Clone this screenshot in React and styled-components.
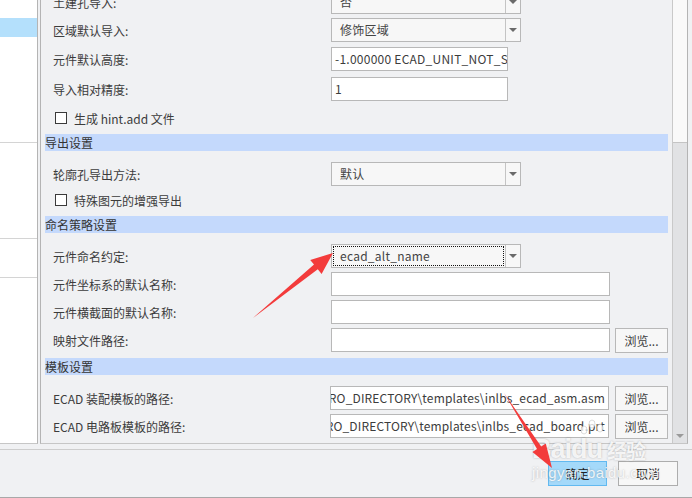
import styled, { createGlobalStyle } from 'styled-components';

const GlobalStyle = createGlobalStyle`
  html, body { margin: 0; padding: 0; }
  body {
    background: #f0f1f3;
    font-family: "Noto Sans CJK SC", "Noto Sans", sans-serif;
  }
`;

const FONT = `"Noto Sans CJK SC", "Noto Sans", sans-serif`;

const Window = styled.div`
  position: relative;
  width: 692px;
  height: 498px;
  overflow: hidden;
  background: #f0f1f3;
  display: flex;
  flex-direction: column;
  font-family: ${FONT};
  font-size: 12px;
  color: #3c3c3c;
`;

const Body = styled.div`
  display: flex;
  height: 444px;
  flex-shrink: 0;
`;

const NavPane = styled.div`
  width: 37px;
  background: #ffffff;
  border-right: 1px solid #b4b4b4;
  border-bottom: 1px solid #c6c6c6;
  display: flex;
  flex-direction: column;
`;

const NavItem = styled.div`
  height: ${p => p.$h}px;
  flex-shrink: 0;
  box-sizing: border-box;
  background: ${p => (p.$selected ? '#b4e0fc' : 'transparent')};
  border-bottom: ${p => (p.$line ? '1px solid #d4d4d4' : 'none')};
`;

const Panel = styled.div`
  width: 648px;
  margin-left: 2px;
  box-sizing: border-box;
  border-left: 1px solid #b4b4b4;
  border-right: 1px solid #b4b4b4;
  border-bottom: 1px solid #c6c6c6;
  display: flex;
`;

const Content = styled.div`
  flex: 1;
  overflow: hidden;
  padding: 0 4px;
`;

const Column = styled.div`
  margin-top: -12px;
  display: flex;
  flex-direction: column;
`;

const Band = styled.div`
  height: 17px;
  margin-top: 4px;
  margin-bottom: ${p => p.$after || 0}px;
  background: #c4d9fc;
  line-height: 17px;
  color: #333;
  white-space: nowrap;
`;

const Row = styled.div`
  display: flex;
  align-items: center;
  height: ${p => p.$h || 28}px;
  flex-shrink: 0;
`;

const Label = styled.div`
  width: 286px;
  box-sizing: border-box;
  padding-left: 8px;
  white-space: nowrap;
  color: #3c3c3c;
`;

const Select = styled.div`
  width: 190px;
  height: 24px;
  box-sizing: border-box;
  border: 1px solid #b8b8b8;
  background: #f7f7f7;
  display: flex;
`;

const SelectValue = styled.div`
  flex: 1;
  position: relative;
  padding-left: 8px;
  line-height: 22px;
  color: #444;
  letter-spacing: 0.25px;
  white-space: nowrap;
  overflow: hidden;
  &::after {
    content: '';
    display: ${p => (p.$focused ? 'block' : 'none')};
    position: absolute;
    inset: 1px 1px 1px 1px;
    border: 1px dotted #111;
  }
`;

const SelectArrow = styled.div`
  width: 14px;
  border-left: 1px solid #c4c4c4;
  display: flex;
  align-items: center;
  justify-content: center;
  &::before {
    content: '';
    border-left: 4px solid transparent;
    border-right: 4px solid transparent;
    border-top: 4px solid #6a6a6a;
  }
`;

const TextField = styled.div`
  width: ${p => p.$w}px;
  height: 24px;
  box-sizing: border-box;
  margin-left: ${p => p.$shift || 0}px;
  border: 1px solid #b8b8b8;
  background: #ffffff;
  padding: 0 3px;
  line-height: 22px;
  letter-spacing: ${p => (p.$end ? 0.15 : 0.25)}px;
  color: #3c3c3c;
  white-space: nowrap;
  overflow: hidden;
  display: flex;
  justify-content: ${p => (p.$end ? 'flex-end' : 'flex-start')};
`;

const Browse = styled.div`
  width: 53px;
  height: 25px;
  box-sizing: border-box;
  margin-left: ${p => p.$gap || 5}px;
  border: 1px solid #b8b8b8;
  background: #f7f7f7;
  display: flex;
  align-items: center;
  justify-content: center;
  color: #3c3c3c;
`;

const CheckRow = styled.div`
  display: flex;
  align-items: center;
  height: 24px;
  margin-top: ${p => p.$top || 0}px;
  padding-left: 10px;
`;

const Box = styled.div`
  width: 12px;
  height: 12px;
  box-sizing: border-box;
  border: 1px solid #3a3a3a;
  background: #fff;
  margin-right: 7px;
`;

const Scrollbar = styled.div`
  width: 15px;
  background: #e1e2e4;
  border-left: 1px solid #c9c9c9;
  box-sizing: border-box;
  display: flex;
  flex-direction: column;
`;

const Thumb = styled.div`
  height: 142px;
  background: #f9f9f9;
  border-bottom: 1px solid #c4c4c4;
`;

const Track = styled.div`
  flex: 1;
`;

const ScrollDown = styled.div`
  height: 14px;
  display: flex;
  align-items: center;
  justify-content: center;
  &::before {
    content: '';
    border-left: 4px solid transparent;
    border-right: 4px solid transparent;
    border-top: 4px solid #9a9a9a;
  }
`;

const Footer = styled.div`
  flex: 1;
  margin-top: 5px;
  border-top: 1px solid #cdcdcd;
  border-bottom: 1px solid #a8a8a8;
  display: flex;
  justify-content: flex-end;
  align-items: flex-start;
  gap: 11px;
  padding: 11px 14px 0 0;
`;

const DialogButton = styled.div`
  width: ${p => p.$w}px;
  height: 25px;
  box-sizing: border-box;
  border: 1px solid ${p => (p.$primary ? '#62b9f0' : '#adadad')};
  background: ${p => (p.$primary ? '#a4d9fa' : '#f7f7f7')};
  display: flex;
  align-items: center;
  justify-content: center;
  color: #222;
  font-size: 12px;
`;

const Overlay = styled.svg`
  position: absolute;
  left: 0;
  top: 0;
  pointer-events: none;
`;

const Watermark = styled.div`
  position: absolute;
  left: 532px;
  top: 436px;
  pointer-events: none;
  color: rgba(255, 255, 255, 0.85);
  text-shadow: 0 0 2px rgba(60, 60, 60, 0.35);
  font-family: "Liberation Sans", Arial, sans-serif;
  display: flex;
  flex-direction: column;
`;

const MarkTop = styled.div`
  display: flex;
  align-items: flex-end;
  font-weight: bold;
  font-size: 27px;
  line-height: 27px;
  letter-spacing: -1px;
`;

const MarkCn = styled.span`
  font-family: ${FONT};
  font-size: 20px;
  line-height: 24px;
  font-weight: bold;
  margin-left: 5px;
`;

const MarkUrl = styled.div`
  font-size: 15px;
  line-height: 18px;
  margin-top: 1px;
  letter-spacing: 0.4px;
`;

function Dropdown({ value, focused }) {
  return (
    <Select>
      <SelectValue $focused={focused}>{value}</SelectValue>
      <SelectArrow />
    </Select>
  );
}

export default function App() {
  return (
    <Window>
      <GlobalStyle />
      <Body>
        <NavPane>
          <NavItem $h={18} />
          <NavItem $h={19} $selected />
          <NavItem $h={106} $line />
          <NavItem $h={96} $line />
          <NavItem $h={39} $line />
        </NavPane>
        <Panel>
          <Content>
            <Column>
              <Row>
                <Label>土建孔导入:</Label>
                <Dropdown value="否" />
              </Row>
              <Row>
                <Label>区域默认导入:</Label>
                <Dropdown value="修饰区域" />
              </Row>
              <Row $h={30}>
                <Label>元件默认高度:</Label>
                <TextField $w={177}>-1.000000 ECAD_UNIT_NOT_SET</TextField>
              </Row>
              <Row $h={30}>
                <Label>导入相对精度:</Label>
                <TextField $w={177}>1</TextField>
              </Row>
              <CheckRow $top={2}>
                <Box />
                生成 hint.add 文件
              </CheckRow>

              <Band $after={9}>导出设置</Band>
              <Row>
                <Label>轮廓孔导出方法:</Label>
                <Dropdown value="默认" />
              </Row>
              <CheckRow>
                <Box />
                特殊图元的增强导出
              </CheckRow>

              <Band $after={9}>命名策略设置</Band>
              <Row>
                <Label>元件命名约定:</Label>
                <Dropdown value="ecad_alt_name" focused />
              </Row>
              <Row>
                <Label>元件坐标系的默认名称:</Label>
                <TextField $w={279} />
              </Row>
              <Row>
                <Label>元件横截面的默认名称:</Label>
                <TextField $w={279} />
              </Row>
              <Row>
                <Label>映射文件路径:</Label>
                <TextField $w={279} />
                <Browse>浏览...</Browse>
              </Row>

              <Band $after={9}>模板设置</Band>
              <Row>
                <Label>ECAD 装配模板的路径:</Label>
                <TextField $w={279} $shift={-1} $end>
                  PRO_DIRECTORY\templates\inlbs_ecad_asm.asm
                </TextField>
                <Browse $gap={6}>浏览...</Browse>
              </Row>
              <Row>
                <Label>ECAD 电路板模板的路径:</Label>
                <TextField $w={279} $shift={-1} $end>
                  PRO_DIRECTORY\templates\inlbs_ecad_board.prt
                </TextField>
                <Browse $gap={6}>浏览...</Browse>
              </Row>
            </Column>
          </Content>
          <Scrollbar>
            <Thumb />
            <Track />
            <ScrollDown />
          </Scrollbar>
        </Panel>
      </Body>
      <Footer>
        <DialogButton $w={59} $primary>确定</DialogButton>
        <DialogButton $w={60}>取消</DialogButton>
      </Footer>

      <Watermark>
        <MarkTop>
          Bai<span>du</span>
          <MarkCn>经验</MarkCn>
        </MarkTop>
        <MarkUrl>jingyan.baidu.com</MarkUrl>
      </Watermark>

      <Overlay width="692" height="498" viewBox="0 0 692 498">
        <g fill="rgba(255,255,255,0.8)" stroke="rgba(80,80,80,0.25)" strokeWidth="0.8">
          <ellipse cx="584" cy="430" rx="3" ry="4" />
          <ellipse cx="592" cy="424" rx="3" ry="4" />
          <ellipse cx="600" cy="428" rx="3" ry="4" />
        </g>
        <polygon
          fill="#f33b3b"
          points="253,318 314,264.6 310.2,259.9 333,253 321.6,273.9 317.8,269.2"
        />
        <polygon
          fill="#f33b3b"
          points="504,393 541.2,446.5 545.8,443.5 552,468 532.4,452.1 537,449.1"
        />
      </Overlay>
    </Window>
  );
}
